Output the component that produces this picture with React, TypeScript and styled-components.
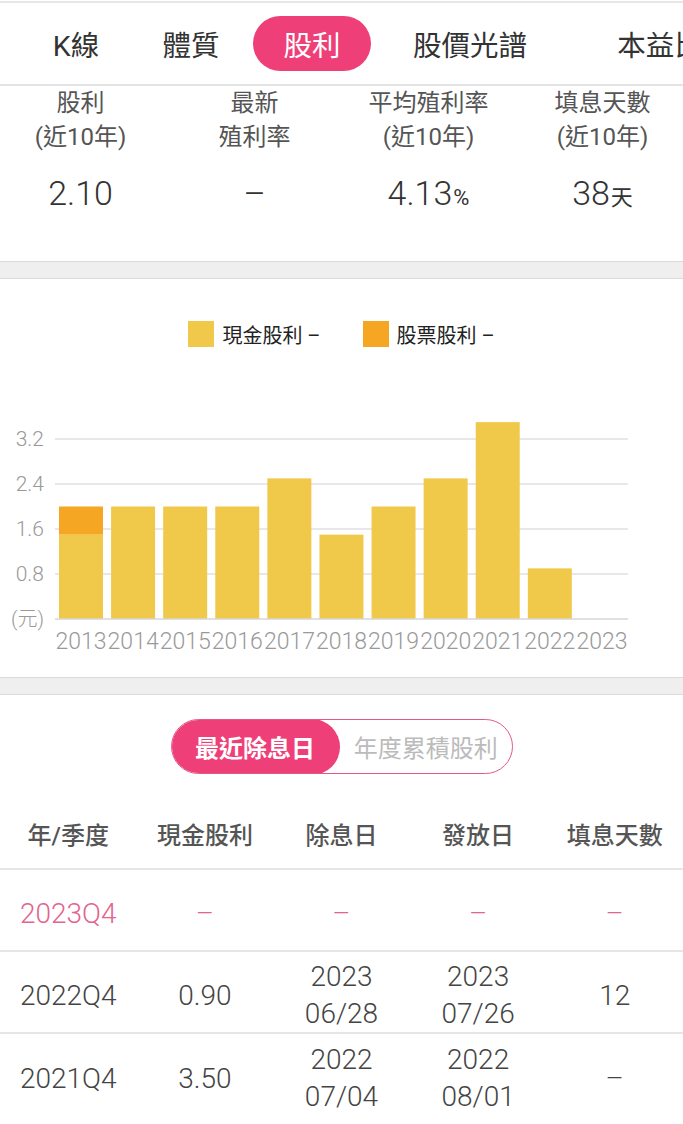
import React from "react";
import styled, { createGlobalStyle } from "styled-components";

const GlobalStyle = createGlobalStyle`
  html, body { margin: 0; padding: 0; background: #fff; }
  body { font-family: Roboto, "Noto Sans CJK TC", sans-serif; -webkit-font-smoothing: antialiased; }
  * { box-sizing: border-box; }
`;

const PINK = "#ee3f78";
const CASH = "#f0c94b";
const STOCK = "#f5a623";

const Page = styled.div`
  width: 683px;
  padding-top: 1px;
  overflow: hidden;
  background: #fff;
`;

const TabBar = styled.nav`
  display: flex;
  align-items: center;
  height: 85px;
  padding-left: 23px;
  border-top: 2px solid #e6e6e6;
  border-bottom: 2px solid #e3e3e3;
  white-space: nowrap;
  overflow: hidden;
`;

const Tab = styled.div<{ $active?: boolean; $w: number }>`
  flex: none;
  display: flex;
  align-items: center;
  justify-content: center;
  width: ${(p) => p.$w}px;
  height: 55px;
  border-radius: 28px;
  font-size: 28.5px;
  color: ${(p) => (p.$active ? "#fff" : "#333")};
  background: ${(p) => (p.$active ? PINK : "transparent")};
`;

const Stats = styled.section`
  display: grid;
  grid-template-columns: repeat(4, 174px);
  justify-content: center;
  padding-bottom: 43px;
`;

const StatCell = styled.div`
  display: flex;
  flex-direction: column;
  align-items: center;
  text-align: center;
`;

const StatLabel = styled.div`
  font-size: 24px;
  line-height: 34px;
  color: #555;
  white-space: pre-line;
`;

const StatValue = styled.div`
  margin-top: 19px;
  font-size: 34px;
  font-weight: 300;
  line-height: 40px;
  color: #333;
`;

const Unit = styled.span`
  font-size: 22px;
  font-weight: 400;
  margin-left: 1px;
`;

const Band = styled.div`
  height: 18px;
  background: #efefef;
  border-top: 1.5px solid #dadada;
  border-bottom: 1.5px solid #dadada;
`;

const ChartSection = styled.section`
  padding: 42px 0 16px;
`;

const Legend = styled.div`
  display: flex;
  justify-content: center;
  align-items: center;
  gap: 42px;
  height: 26px;
`;

const LegendItem = styled.div`
  display: flex;
  align-items: center;
  gap: 8px;
`;

const Swatch = styled.span<{ $color: string }>`
  width: 26px;
  height: 26px;
  background: ${(p) => p.$color};
`;

const LegendText = styled.span`
  font-size: 20px;
  color: #222;
`;

const ChartSvg = styled.svg`
  display: block;
  margin-top: 14px;
`;

const TableSection = styled.section`
  padding-top: 24px;
`;

const Toggle = styled.div`
  display: flex;
  width: 342px;
  height: 55px;
  margin: 0 auto;
  border: 1.5px solid #e45886;
  border-radius: 28px;
  overflow: hidden;
`;

const Segment = styled.div<{ $active?: boolean }>`
  display: flex;
  align-items: center;
  justify-content: center;
  ${(p) => (p.$active ? "width: 170px; margin: -1.5px 0 -1.5px -1.5px;" : "flex: 1;")}
  border-radius: 28px;
  font-size: 24px;
  font-weight: ${(p) => (p.$active ? 700 : 400)};
  color: ${(p) => (p.$active ? "#fff" : "#bbb")};
  background: ${(p) => (p.$active ? PINK : "transparent")};
`;

const HeaderRow = styled.div`
  display: grid;
  grid-template-columns: repeat(5, 1fr);
  align-items: center;
  height: 72px;
  margin-top: 24px;
  border-bottom: 2px solid #e6e6e6;
  font-size: 24px;
  font-weight: 500;
  color: #555;
`;

const Row = styled.div<{ $tone: string }>`
  display: grid;
  grid-template-columns: repeat(5, 1fr);
  align-items: center;
  height: 82px;
  padding-top: 6px;
  border-bottom: 2px solid #e6e6e6;
  font-size: 28px;
  font-weight: 300;
  line-height: 37px;
  color: ${(p) => p.$tone};
  &:last-child { border-bottom: none; }
`;

const Cell = styled.div`
  text-align: center;
  white-space: pre-line;
`;

const tabs = [
  { name: "K線", w: 106 },
  { name: "體質", w: 124 },
  { name: "股利", w: 118 },
  { name: "股價光譜", w: 198 },
  { name: "本益比", w: 182 },
];

const stats = [
  { label: "股利\n(近10年)", value: "2.10" },
  { label: "最新\n殖利率", value: "–" },
  { label: "平均殖利率\n(近10年)", value: "4.13", unit: "%" },
  { label: "填息天數\n(近10年)", value: "38", unit: "天" },
];

const bars = [
  { year: "2013", cash: 1.5, stock: 0.5 },
  { year: "2014", cash: 2.0, stock: 0 },
  { year: "2015", cash: 2.0, stock: 0 },
  { year: "2016", cash: 2.0, stock: 0 },
  { year: "2017", cash: 2.5, stock: 0 },
  { year: "2018", cash: 1.5, stock: 0 },
  { year: "2019", cash: 2.0, stock: 0 },
  { year: "2020", cash: 2.5, stock: 0 },
  { year: "2021", cash: 3.5, stock: 0 },
  { year: "2022", cash: 0.9, stock: 0 },
  { year: "2023", cash: 0, stock: 0 },
];

const rows = [
  { tone: "#e2648f", cells: ["2023Q4", "–", "–", "–", "–"] },
  { tone: "#444", cells: ["2022Q4", "0.90", "2023\n06/28", "2023\n07/26", "12"] },
  { tone: "#444", cells: ["2021Q4", "3.50", "2022\n07/04", "2022\n08/01", "–"] },
];

const X0 = 55;
const X1 = 628;
const BASE = 258;
const UNIT = 56.25;
const CAT = (X1 - X0) / bars.length;

function Chart() {
  const ticks = [3.2, 2.4, 1.6, 0.8];
  return (
    <ChartSvg width={683} height={300} viewBox="0 0 683 300">
      {ticks.map((t) => {
        const y = BASE - t * UNIT;
        return (
          <g key={t}>
            <line x1={X0} x2={X1} y1={y} y2={y} stroke="#e0e0e0" strokeWidth={1.5} />
            <text x={44} y={y + 7} textAnchor="end" fontSize={21} fontWeight={300} fill="#999" fontFamily="Roboto, sans-serif">
              {t.toFixed(1)}
            </text>
          </g>
        );
      })}
      {bars.map((b, i) => {
        const x = X0 + i * CAT + 4;
        const hc = b.cash * UNIT;
        const hs = b.stock * UNIT;
        return (
          <g key={b.year}>
            {hc > 0 && <rect x={x} y={BASE - hc} width={44} height={hc} fill={CASH} />}
            {hs > 0 && <rect x={x} y={BASE - hc - hs} width={44} height={hs} fill={STOCK} />}
            <text x={X0 + i * CAT + CAT / 2} y={288} textAnchor="middle" fontSize={23} fontWeight={300} fill="#999" fontFamily="Roboto, sans-serif">
              {b.year}
            </text>
          </g>
        );
      })}
      <line x1={X0} x2={X1} y1={BASE} y2={BASE} stroke="#d6d6d6" strokeWidth={1.5} />
      <text x={44} y={BASE + 7} textAnchor="end" fontSize={20} fontWeight={300} fill="#999" fontFamily='Roboto, "Noto Sans CJK TC", sans-serif'>
        (元)
      </text>
    </ChartSvg>
  );
}

export default function App() {
  return (
    <Page>
      <GlobalStyle />
      <TabBar>
        {tabs.map((t) => (
          <Tab key={t.name} $w={t.w} $active={t.name === "股利"}>
            {t.name}
          </Tab>
        ))}
      </TabBar>

      <Stats>
        {stats.map((s) => (
          <StatCell key={s.label}>
            <StatLabel>{s.label}</StatLabel>
            <StatValue>
              {s.value}
              {s.unit && <Unit>{s.unit}</Unit>}
            </StatValue>
          </StatCell>
        ))}
      </Stats>

      <Band />

      <ChartSection>
        <Legend>
          <LegendItem>
            <Swatch $color={CASH} />
            <LegendText>現金股利 –</LegendText>
          </LegendItem>
          <LegendItem>
            <Swatch $color={STOCK} />
            <LegendText>股票股利 –</LegendText>
          </LegendItem>
        </Legend>
        <Chart />
      </ChartSection>

      <Band />

      <TableSection>
        <Toggle>
          <Segment $active>最近除息日</Segment>
          <Segment>年度累積股利</Segment>
        </Toggle>
        <HeaderRow>
          <Cell>年/季度</Cell>
          <Cell>現金股利</Cell>
          <Cell>除息日</Cell>
          <Cell>發放日</Cell>
          <Cell>填息天數</Cell>
        </HeaderRow>
        {rows.map((r) => (
          <Row key={r.cells[0]} $tone={r.tone}>
            {r.cells.map((c, i) => (
              <Cell key={i}>{c}</Cell>
            ))}
          </Row>
        ))}
      </TableSection>
    </Page>
  );
}
